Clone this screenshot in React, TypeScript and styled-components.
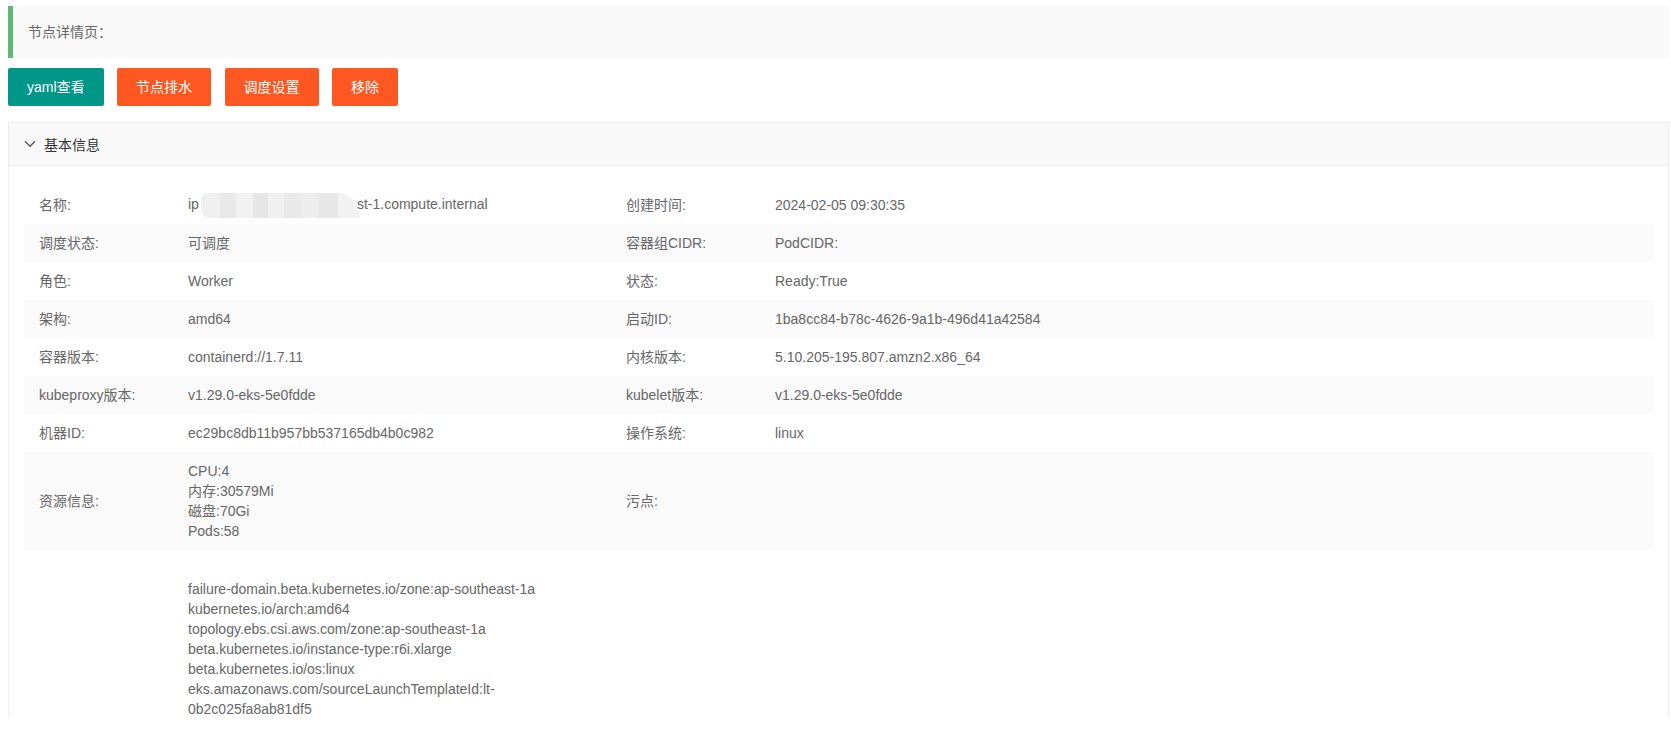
import React from "react";
import styled, { createGlobalStyle } from "styled-components";

const GlobalStyle = createGlobalStyle`
  html, body {
    margin: 0;
    padding: 0;
    background: #fff;
  }
  body {
    font-family: "Liberation Sans", Arial, "Noto Sans CJK SC", sans-serif;
    color: #666;
  }
`;

const Page = styled.div`
  height: 717px;
  overflow: hidden;
  padding: 6px 2px 0 8px;
  box-sizing: border-box;
`;

const Quote = styled.div`
  border-left: 5px solid #5fb878;
  background: #f9f9f9;
  border-radius: 0 2px 2px 0;
  padding: 15px;
  font-size: 14px;
  line-height: 22px;
  color: #666;
  margin-bottom: 10px;
`;

const Toolbar = styled.div`
  display: flex;
  gap: 13.5px;
  margin-bottom: 16px;
`;

const Button = styled.button<{ $tone: "teal" | "danger" }>`
  height: 38px;
  padding: 0 18px;
  border: 1px solid transparent;
  border-radius: 2px;
  background: ${(p) => (p.$tone === "teal" ? "#009688" : "#ff5722")};
  color: #fff;
  font-family: inherit;
  font-size: 14px;
  line-height: 36px;
  cursor: pointer;
  white-space: nowrap;
`;

const Collapse = styled.div`
  border: 1px solid #eee;
  border-bottom: none;
  border-radius: 2px 2px 0 0;
`;

const CollapseTitle = styled.div`
  height: 42px;
  display: flex;
  align-items: center;
  padding: 0 15px;
  gap: 8px;
  background: #f9f9f9;
  color: #333;
  font-size: 14px;
  border-bottom: 1px solid #eee;
`;

const CollapseBody = styled.div`
  padding: 10px 15px 0;
`;

const Table = styled.div`
  margin-top: 10px;
`;

const Row = styled.div<{ $striped: boolean; $lines?: number }>`
  display: grid;
  grid-template-columns: 149px 438px 149px 1fr;
  align-items: center;
  height: ${(p) => (p.$lines ? `${p.$lines * 20 + 18}px` : "auto")};
  background: ${(p) => (p.$striped ? "#fafafa" : "#fff")};
  font-size: 14px;
  line-height: 20px;
  color: #666;
`;

const Cell = styled.div`
  padding: 0 15px;
  min-width: 0;
`;

const Lines = styled.div`
  display: flex;
  flex-direction: column;
  padding: 9px 0;
`;

const Line = styled.span`
  display: block;
  height: 20px;
`;

const Blur = styled.span`
  display: inline-block;
  width: 159px;
  height: 25px;
  vertical-align: -9px;
  margin: 0 -3px 0 2px;
  border-radius: 12px 40px 4px 16px;
  background: linear-gradient(
    90deg,
    #efefef 0 12%,
    #e8e8e8 12% 22%,
    #f1f1f1 22% 33%,
    #e6e6e6 33% 42%,
    #f0f0f0 42% 52%,
    #e9e9e9 52% 63%,
    #ededed 63% 74%,
    #e7e7e7 74% 86%,
    #f2f2f2 86% 100%
  );
`;

const Chevron = () => (
  <svg width="12" height="8" viewBox="0 0 12 8" fill="none">
    <path d="M1 1.2 L6 6.3 L11 1.2" stroke="#555" strokeWidth="1.3" />
  </svg>
);

type Item = {
  cells: [string, React.ReactNode, string, React.ReactNode];
  lines?: number;
};

// the labels row runs past the bottom of the visible area
const labelLines = [
  "",
  "failure-domain.beta.kubernetes.io/zone:ap-southeast-1a",
  "kubernetes.io/arch:amd64",
  "topology.ebs.csi.aws.com/zone:ap-southeast-1a",
  "beta.kubernetes.io/instance-type:r6i.xlarge",
  "beta.kubernetes.io/os:linux",
  "eks.amazonaws.com/sourceLaunchTemplateId:lt-0b2c025fa8ab81df5",
];

const rows: Item[] = [
  {
    cells: [
      "名称:",
      <>
        ip<Blur />st-1.compute.internal
      </>,
      "创建时间:",
      "2024-02-05 09:30:35",
    ],
    lines: 1,
  },
  { cells: ["调度状态:", "可调度", "容器组CIDR:", "PodCIDR:"], lines: 1 },
  { cells: ["角色:", "Worker", "状态:", "Ready:True"], lines: 1 },
  { cells: ["架构:", "amd64", "启动ID:", "1ba8cc84-b78c-4626-9a1b-496d41a42584"], lines: 1 },
  { cells: ["容器版本:", "containerd://1.7.11", "内核版本:", "5.10.205-195.807.amzn2.x86_64"], lines: 1 },
  { cells: ["kubeproxy版本:", "v1.29.0-eks-5e0fdde", "kubelet版本:", "v1.29.0-eks-5e0fdde"], lines: 1 },
  { cells: ["机器ID:", "ec29bc8db11b957bb537165db4b0c982", "操作系统:", "linux"], lines: 1 },
  {
    cells: [
      "资源信息:",
      <Lines>
        <Line>CPU:4</Line>
        <Line>内存:30579Mi</Line>
        <Line>磁盘:70Gi</Line>
        <Line>Pods:58</Line>
      </Lines>,
      "污点:",
      "",
    ],
    lines: 4,
  },
  {
    cells: [
      "",
      <Lines>
        {labelLines.map((l, i) => (
          <span key={i}>{l || "\u00a0"}</span>
        ))}
      </Lines>,
      "",
      "",
    ],
  },
];

export default function App() {
  return (
    <>
      <GlobalStyle />
      <Page>
        <Quote>节点详情页：</Quote>
        <Toolbar>
          <Button $tone="teal">yaml查看</Button>
          <Button $tone="danger">节点排水</Button>
          <Button $tone="danger">调度设置</Button>
          <Button $tone="danger">移除</Button>
        </Toolbar>
        <Collapse>
          <CollapseTitle>
            <Chevron />
            基本信息
          </CollapseTitle>
          <CollapseBody>
            <Table>
              {rows.map((r, i) => (
                <Row key={i} $striped={i % 2 === 1} $lines={r.lines}>
                  {r.cells.map((c, j) => (
                    <Cell key={j}>{c}</Cell>
                  ))}
                </Row>
              ))}
            </Table>
          </CollapseBody>
        </Collapse>
      </Page>
    </>
  );
}
